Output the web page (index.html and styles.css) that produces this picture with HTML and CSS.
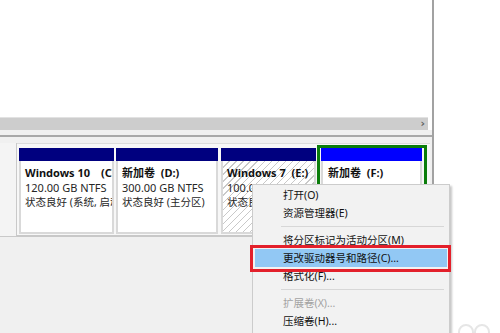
FILE: index.html
```html
<!DOCTYPE html>
<html lang="zh-CN">
<head>
<meta charset="utf-8">
<link rel="stylesheet" href="styles.css">
</head>
<body>
<div class="screen">
  <div class="window">
    <div class="list"></div>
    <div class="hscroll">
      <div class="track"></div>
      <span class="arrow">›</span>
    </div>
    <div class="splitter"></div>
    <div class="lower">
      <div class="disk">
        <div class="disk-label"></div>
        <div class="parts">
          <div class="part p1">
            <div class="bar navy"></div>
            <div class="body">
              <div class="title">Windows 10&ensp;&ensp;(C:)</div>
              <div class="line size">120.00 GB NTFS</div>
              <div class="line">状态良好 (系统, 启动, 页面文件)</div>
            </div>
          </div>
          <div class="part p2">
            <div class="bar navy"></div>
            <div class="body">
              <div class="title">新加卷&nbsp;&nbsp;(D:)</div>
              <div class="line size">300.00 GB NTFS</div>
              <div class="line">状态良好 (主分区)</div>
            </div>
          </div>
          <div class="part p3">
            <div class="bar navy"></div>
            <div class="body hatch">
              <div class="title">Windows 7&nbsp;&nbsp;(E:)</div>
              <div class="line size">100.00 GB NTFS</div>
              <div class="line">状态良好 (主分区)</div>
            </div>
          </div>
          <div class="part p4">
            <div class="bar blue"></div>
            <div class="body">
              <div class="title">新加卷&nbsp;&nbsp;(F:)</div>
              <div class="line size">231.51 GB NTFS</div>
              <div class="line">状态良好 (逻辑驱动器)</div>
            </div>
          </div>
        </div>
      </div>
    </div>
  </div>

  <div class="menu">
    <div class="item">打开(O)</div>
    <div class="item">资源管理器(E)</div>
    <div class="sep"></div>
    <div class="item">将分区标记为活动分区(M)</div>
    <div class="item hl">更改驱动器号和路径(C)...</div>
    <div class="item">格式化(F)...</div>
    <div class="sep"></div>
    <div class="item disabled">扩展卷(X)...</div>
    <div class="item">压缩卷(H)...</div>
    <div class="redbox"></div>
  </div>

  <svg class="mark" width="40" height="12" viewBox="0 0 40 12">
    <circle cx="10" cy="10" r="7" fill="none" stroke="#e6e6e6" stroke-width="2"/>
    <circle cx="26" cy="10" r="7" fill="none" stroke="#e6e6e6" stroke-width="2"/>
  </svg>
</div>
</body>
</html>
```

FILE: styles.css
```css
* { box-sizing: border-box; }

html, body {
  margin: 0;
  padding: 0;
  background: #ffffff;
}

body {
  font-family: "Noto Sans", "Noto Sans CJK SC", sans-serif;
  font-size: 10.5px;
  color: #000;
}

.screen {
  position: relative;
  width: 500px;
  height: 333px;
  overflow: hidden;
  background: #fff;
}

.window {
  width: 434px;
  height: 333px;
  border-right: 2px solid #a2a2a2;
  display: flex;
  flex-direction: column;
  background: #fff;
}

.list {
  height: 117px;
  background: #fff;
}

.hscroll {
  height: 13px;
  margin-right: 4px;
  background: #cdcdcd;
  border-top: 1px solid #e2e2e2;
  display: flex;
  align-items: center;
  justify-content: flex-end;
  padding-right: 3px;
}

.hscroll .arrow {
  font-family: "DejaVu Sans", sans-serif;
  font-size: 11px;
  font-weight: bold;
  color: #606060;
  line-height: 10px;
}

.splitter {
  height: 7px;
  background: #f0f0f0;
  border-bottom: 2px solid #a8a8a8;
}

.lower {
  flex: 1;
  background: #f0f0f0;
  padding-top: 6px;
}

.disk {
  display: flex;
  height: 94px;
}

.disk-label {
  width: 17px;
  background: #f4f4f4;
  border-right: 1px solid #c9c9c9;
  border-bottom: 1px solid #c9c9c9;
}

.parts {
  width: 413px;
  display: flex;
  align-items: flex-start;
  background: #f7f7f7;
  border-top: 1px solid #dcdcdc;
  border-bottom: 2px solid #c8c8c8;
  padding: 4px 0 0 2px;
}

.part {
  display: flex;
  flex-direction: column;
  height: 86px;
}

.p1 { width: 95px; margin-right: 2px; }
.p2 { width: 102px; margin-right: 3px; }
.p3 { width: 95px; margin-right: 1px; }
.p4 {
  width: 110px;
  margin-top: -3px;
  height: 92px;
  border: 3px solid #0b7d0b;
  padding: 0 2px 0 1px;
}

.bar {
  height: 13px;
  flex: none;
}
.navy { background: #00007f; }
.blue { background: #0000ff; }

.body {
  flex: 1;
  background: #fff;
  border: 2px solid #d9d9d9;
  border-top: none;
  padding: 5px 0 0 4px;
  overflow: hidden;
  white-space: nowrap;
  line-height: 14.5px;
}

.p4 .body {
  padding-left: 5px;
}

.hatch {
  background: repeating-linear-gradient(135deg, #ffffff 0, #ffffff 4px, #c9c9c9 4px, #c9c9c9 5px);
}

.title {
  font-size: 11px;
  font-weight: bold;
  color: #111;
}

.line {
  color: #262626;
}

.line.size {
  font-size: 11px;
}

.menu {
  position: absolute;
  left: 252px;
  top: 184px;
  width: 198px;
  height: 160px;
  background: #f2f2f2;
  border: 1px solid #cccccc;
  box-shadow: 2px 2px 2px rgba(0, 0, 0, 0.22);
  padding: 1px 2px;
  font-size: 10.5px;
}

.item {
  height: 18px;
  line-height: 18px;
  padding-left: 28px;
  color: #111;
  white-space: nowrap;
}

.item.hl {
  background: #92c8f4;
}

.item.disabled {
  color: #a3a3a3;
}

.sep {
  height: 1px;
  margin: 4px 3px 4px 26px;
  background: #d7d7d7;
}

.redbox {
  position: absolute;
  left: -3px;
  top: 60px;
  width: 201px;
  height: 27px;
  border: 3px solid #e3202b;
}

.mark {
  position: absolute;
  left: 456px;
  top: 322px;
}
```
